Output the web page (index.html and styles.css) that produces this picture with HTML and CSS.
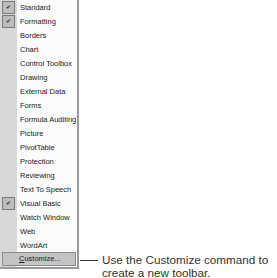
FILE: index.html
```html
<!DOCTYPE html>
<html lang="en">
<head>
  <meta charset="UTF-8" />
  <title>Toolbars menu</title>
  <link rel="stylesheet" href="styles.css">
</head>
<body>
  <div class="figure">
    <div class="menu">
      <ul class="items">
        <li class="checked"><span class="box">&#10004;</span>Standard</li>
        <li class="checked"><span class="box">&#10004;</span>Formatting</li>
        <li><span class="box"></span>Borders</li>
        <li><span class="box"></span>Chart</li>
        <li><span class="box"></span>Control Toolbox</li>
        <li><span class="box"></span>Drawing</li>
        <li><span class="box"></span>External Data</li>
        <li><span class="box"></span>Forms</li>
        <li><span class="box"></span>Formula Auditing</li>
        <li><span class="box"></span>Picture</li>
        <li><span class="box"></span>PivotTable</li>
        <li><span class="box"></span>Protection</li>
        <li><span class="box"></span>Reviewing</li>
        <li><span class="box"></span>Text To Speech</li>
        <li class="checked"><span class="box">&#10004;</span>Visual Basic</li>
        <li><span class="box"></span>Watch Window</li>
        <li><span class="box"></span>Web</li>
        <li><span class="box"></span>WordArt</li>
      </ul>
      <div class="customize"><u>C</u>ustomize...</div>
    </div>
    <div class="callout">
      <span class="line"></span>
      <p>Use the Customize command to<br>create a new toolbar.</p>
    </div>
  </div>
</body>
</html>
```

FILE: styles.css
```css
body {
  margin: 0;
  background: #ffffff;
  font-family: "Liberation Sans", Arial, sans-serif;
  color: #222222;
}

.figure {
  display: flex;
  align-items: flex-start;
}

/* MENU */
.menu {
  width: 77px;
  border-right: 2px solid #9a9a9a;
  border-bottom: 2px solid #9a9a9a;
  background: linear-gradient(to right, #d8d8d8 0, #d8d8d8 17px, #fcfcfc 17px);
  padding-bottom: 1px;
  flex-shrink: 0;
}

.items {
  list-style: none;
  margin: 0;
  padding: 0;
}

.items li {
  display: flex;
  align-items: center;
  height: 14px;
  font-size: 7.5px;
  white-space: nowrap;
  color: #1a1a1a;
}

.box {
  width: 13px;
  height: 13px;
  margin: 0 5px 0 2px;
  box-sizing: border-box;
  font-size: 6px;
  line-height: 11px;
  text-align: center;
  color: #222222;
  flex-shrink: 0;
}

.checked .box {
  background: #bdbdbd;
  border: 1px solid #7a7a7a;
}

.customize {
  margin: 0 1px 0 2px;
  height: 14px;
  line-height: 12px;
  box-sizing: border-box;
  background: #c4c4c4;
  border: 1px solid #8a8a8a;
  padding-left: 16px;
  font-size: 7.5px;
  white-space: nowrap;
  color: #1a1a1a;
}

/* CALLOUT */
.callout {
  display: flex;
  align-items: flex-start;
  margin-top: 253px;
}

.line {
  width: 18px;
  height: 1px;
  background: #333333;
  margin: 7px 4px 0 1px;
}

.callout p {
  margin: 0;
  font-size: 11.7px;
  line-height: 13px;
  white-space: nowrap;
  color: #333333;
}
```
